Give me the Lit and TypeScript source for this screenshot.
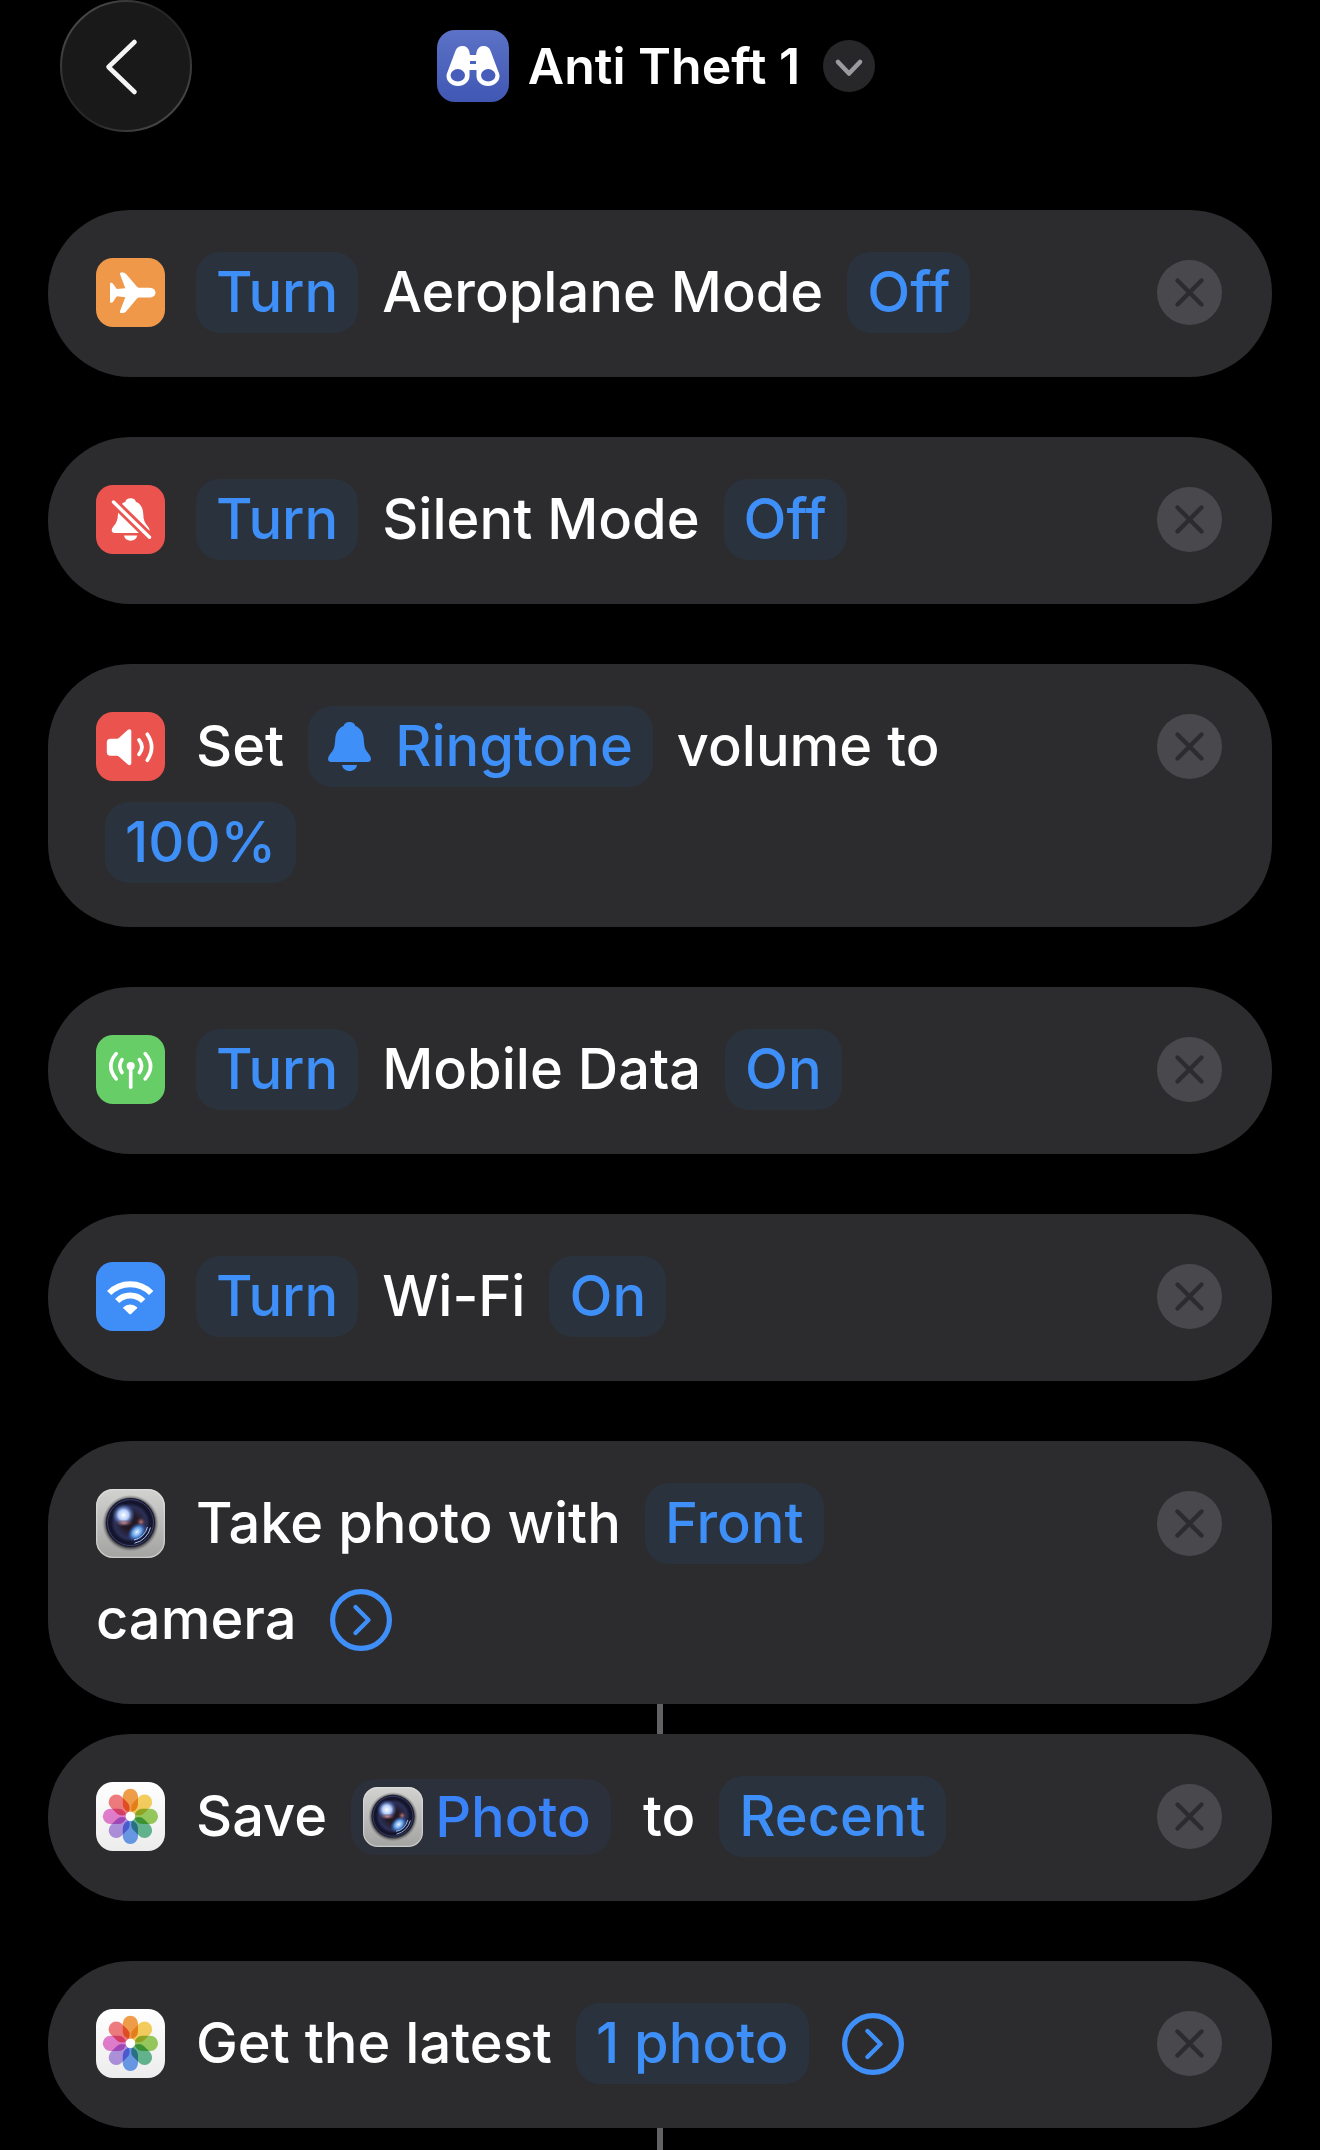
import { LitElement, html, css, svg, nothing } from "lit";
import { customElement, property } from "lit/decorators.js";

type Part =
    | { kind: "text"; text: string }
    | { kind: "chip"; text: string; icon?: string }
    | { kind: "variable"; text: string; icon: string }
    | { kind: "more" }
    | { kind: "group"; parts: Part[] };

interface Action {
    icon: string;
    name: string;
    parts: Part[];
    linked?: boolean;
}

const text = (text: string): Part => ({ kind: "text", text });
const chip = (text: string, icon?: string): Part => ({ kind: "chip", text, icon });
const more: Part = { kind: "more" };

const ACTIONS: Action[] = [
    { icon: "plane", name: "Aeroplane Mode", parts: [chip("Turn"), text("Aeroplane Mode"), chip("Off")] },
    { icon: "silent", name: "Silent Mode", parts: [chip("Turn"), text("Silent Mode"), chip("Off")] },
    { icon: "volume", name: "Volume", parts: [text("Set"), chip("Ringtone", "bell"), text("volume to"), chip("100%")] },
    { icon: "antenna", name: "Mobile Data", parts: [chip("Turn"), text("Mobile Data"), chip("On")] },
    { icon: "wifi", name: "Wi-Fi", parts: [chip("Turn"), text("Wi-Fi"), chip("On")] },
    {
        icon: "camera",
        name: "Take photo",
        parts: [text("Take photo with"), chip("Front"), { kind: "group", parts: [text("camera"), more] }],
        linked: true,
    },
    {
        icon: "photos",
        name: "Save photo",
        parts: [text("Save"), { kind: "variable", text: "Photo", icon: "camera" }, text("to"), chip("Recent")],
    },
    { icon: "photos", name: "Latest photo", parts: [text("Get the latest"), chip("1 photo"), more], linked: true },
];

const bellShape = svg`
    <path d="M21.5 0C18 0 16 1.8 15.6 4C10.5 6 7.8 10.5 7.3 16.5C6.8 23 6.5 26 4.5 29C2.5 32 0 34 0 37C0 39 1.3 40 3.3 40H39.7C41.7 40 43 39 43 37C43 34 40.5 32 38.5 29C36.5 26 36.2 23 35.7 16.5C35.2 10.5 32.5 6 27.4 4C27 1.8 25 0 21.5 0Z"/>
    <path d="M14 43H29C28.5 46.5 25.5 49 21.5 49C17.5 49 14.5 46.5 14 43Z"/>`;

const PETALS = ["#f08a22", "#f6c63a", "#84c33c", "#45ad7c", "#4c8bee", "#a57fe0", "#e264c8", "#ef6064"];

const GLYPHS: Record<string, unknown> = {
    plane: svg`
        <rect width="69" height="69" rx="17" fill="#f0984a"/>
        <path fill="#fff" d="M59.5 34.7C59.5 31 56 29.8 52 29.8H43.5C42.3 29.8 41.6 29.5 40.8 28.6L30.5 16.5C29.2 15 28.2 14.4 26 14.4H25C24 14.4 23.7 15.2 24 16.2L29.3 30.2L20.8 31.1L17.2 26C16.5 25 15.9 24.7 14.9 24.7C14.3 24.7 14 25.1 14 25.7V43.7C14 44.3 14.3 44.7 14.9 44.7C15.9 44.7 16.5 44.4 17.2 43.4L20.8 38.3L29.3 39.2L24 53.2C23.7 54.2 24 55 25 55H26C28.2 55 29.2 54.4 30.5 52.9L40.8 40.8C41.6 39.9 42.3 39.6 43.5 39.6H52C56 39.6 59.5 38.4 59.5 34.7Z"/>`,
    silent: svg`
        <rect width="69" height="69" rx="17" fill="#eb544e"/>
        <g fill="#fff" transform="translate(15.7 13.3) scale(.88 .865)">${bellShape}</g>
        <path stroke="#eb544e" stroke-width="9" d="M14 13.5L57 55.5"/>
        <path stroke="#fff" stroke-width="3.4" stroke-linecap="round" d="M17.5 17L53.5 52.3"/>`,
    volume: svg`
        <rect width="69" height="69" rx="17" fill="#eb544e"/>
        <path fill="#fff" d="M14.5 26.8H20.5C21.6 26.8 22.3 26.5 23.1 25.8L31.6 18C32.4 17.4 33 17.2 33.5 17.2C34.6 17.2 35.3 18 35.3 19V51.3C35.3 52.3 34.6 53.2 33.5 53.2C32.9 53.2 32.3 52.9 31.6 52.3L23.1 44.8C22.3 44.1 21.6 43.8 20.5 43.8H14.5C12 43.8 10.8 42.5 10.8 40V30.6C10.8 28.1 12 26.8 14.5 26.8Z"/>
        <g fill="none" stroke="#fff" stroke-width="3.7" stroke-linecap="round">
            <path d="M43 28Q49 35.2 43 42.4"/>
            <path d="M51.3 22.3Q60 35.2 51.3 48.3"/>
        </g>`,
    antenna: svg`
        <rect width="69" height="69" rx="17" fill="#67ce67"/>
        <circle cx="34.7" cy="31" r="4" fill="#fff"/>
        <g fill="none" stroke="#fff" stroke-width="3.6" stroke-linecap="round">
            <path d="M34.7 31V52.3"/>
            <path d="M26 24.6Q21.6 31 26 37.6M43.4 24.6Q47.8 31 43.4 37.6"/>
            <path d="M20.2 18.6Q9.4 31 20.2 43.8M49.2 18.6Q60 31 49.2 43.8"/>
        </g>`,
    wifi: svg`
        <rect width="69" height="69" rx="17" fill="#3f8ef7"/>
        <g fill="none" stroke="#fff" stroke-width="6">
            <path d="M13.2 31A29.5 29.5 0 0 1 55.2 31"/>
            <path d="M21.2 39A18 18 0 0 1 47.2 39"/>
        </g>
        <path fill="#fff" d="M27.3 45.3A9.8 9.8 0 0 1 41.1 45.3C41.4 45.7 41.3 46 41 46.3L35.1 52C34.5 52.5 33.9 52.5 33.3 52L27.4 46.3C27.1 46 27 45.7 27.3 45.3Z"/>`,
    camera: svg`
        <defs>
            <linearGradient id="body" x2="0" y2="1"><stop stop-color="#d2d2d1"/><stop offset="1" stop-color="#a3a3a2"/></linearGradient>
            <radialGradient id="halo"><stop offset=".86" stop-color="#4a4a4c"/><stop offset="1" stop-color="#8b8b8b" stop-opacity="0"/></radialGradient>
            <radialGradient id="glass"><stop offset=".3" stop-color="#231a26"/><stop offset=".65" stop-color="#2c3058"/><stop offset=".8" stop-color="#13142a"/><stop offset="1" stop-color="#191a2c"/></radialGradient>
            <radialGradient id="shine"><stop stop-color="#fff"/><stop offset=".45" stop-color="#b4ccfb"/><stop offset="1" stop-color="#3158b8" stop-opacity="0"/></radialGradient>
            <radialGradient id="glow"><stop stop-color="#e9f6ff"/><stop offset=".5" stop-color="#5e9ce6"/><stop offset="1" stop-color="#2450ae" stop-opacity="0"/></radialGradient>
            <radialGradient id="warm"><stop stop-color="#d79287" stop-opacity=".85"/><stop offset="1" stop-color="#6b3036" stop-opacity="0"/></radialGradient>
        </defs>
        <rect width="69" height="69" rx="17" fill="url(#body)"/>
        <rect x=".7" y=".7" width="67.6" height="67.6" rx="16.4" fill="none" stroke="#e4e4e3" stroke-opacity=".6" stroke-width="1.2"/>
        <circle cx="34.5" cy="34.3" r="28.5" fill="url(#halo)"/>
        <circle cx="34.5" cy="33.6" r="24.6" fill="url(#glass)"/>
        <circle cx="34.5" cy="33.6" r="23" fill="none" stroke="#3b4070" stroke-width="1"/>
        <ellipse cx="27.5" cy="26" rx="11.5" ry="11.5" fill="url(#shine)"/>
        <ellipse cx="28" cy="34" rx="9" ry="3.5" fill="url(#warm)"/>
        <ellipse cx="45" cy="33" rx="5" ry="5" fill="url(#warm)"/>
        <ellipse cx="41" cy="43" rx="11" ry="8" fill="url(#glow)" transform="rotate(-45 41 43)"/>
        <path fill="none" stroke="#a9c6f4" stroke-width="1" d="M51.5 38A17.5 17.5 0 0 1 38 51M54.5 38.5A20.8 20.8 0 0 1 38.5 54.2"/>`,
    photos: svg`
        <defs><linearGradient id="paper" x2="0" y2="1"><stop stop-color="#fff"/><stop offset="1" stop-color="#ececec"/></linearGradient></defs>
        <rect width="69" height="69" rx="17" fill="url(#paper)"/>
        <g transform="translate(34.4 34.3)">
            ${PETALS.map((color, i) => svg`<rect class="petal" x="-7.6" y="-27.6" width="15.2" height="23.4" rx="7.6" fill=${color} transform="rotate(${i * 45})"/>`)}
            <circle r="4.6" fill="#fff"/>
        </g>`,
};

const tile = (name: string) => html`<svg class="tile" viewBox="0 0 69 69" aria-hidden="true">${GLYPHS[name]}</svg>`;

@customElement("shortcut-action")
export class ShortcutAction extends LitElement {
    @property({ attribute: false }) action!: Action;

    static styles = [
        css`
            :host {
                display: block;
            }
            .card {
                display: flex;
                align-items: flex-start;
                gap: 32px;
                padding: 42px 50px 44px 48px;
                border-radius: 83px;
                background: #2c2c2e;
            }
            .line {
                flex: 1;
                display: flex;
                flex-wrap: wrap;
                align-items: center;
                gap: 15px;
                color: #fff;
            }
            .tile {
                display: block;
                flex: none;
                width: 69px;
                height: 69px;
            }
            .line > .tile {
                margin-right: 16px;
            }
            .petal {
                mix-blend-mode: multiply;
                opacity: 0.82;
            }
            .word {
                line-height: 81px;
                white-space: nowrap;
            }
            button {
                font: inherit;
                border: 0;
                cursor: pointer;
            }
            .chip {
                display: flex;
                align-items: center;
                gap: 24px;
                margin: 0 9px;
                padding: 0 20px;
                border-radius: 24px;
                background: #2a333d;
                color: #3f8ff8;
                line-height: 81px;
                white-space: nowrap;
            }
            .line > .tile + .chip {
                margin-left: 0;
            }
            .bell {
                width: 43px;
                height: 49px;
                fill: currentColor;
            }
            .variable {
                gap: 12px;
                margin-right: 17px;
                padding: 0 20px 0 12px;
                background: #2b303b;
                color: #3a82f7;
                line-height: 76px;
            }
            .variable .tile {
                width: 60px;
                height: 60px;
            }
            .group {
                display: flex;
                align-items: center;
                gap: 24px;
            }
            .more {
                display: block;
                margin-left: 9px;
                padding: 0;
                background: none;
                color: #3f8ff8;
            }
            .more svg,
            .remove svg {
                display: block;
            }
            .remove {
                flex: none;
                margin-top: 8px;
                padding: 0;
                background: none;
            }
        `,
    ];

    renderPart(part: Part): unknown {
        switch (part.kind) {
            case "text":
                return html`<span class="word">${part.text}</span>`;
            case "chip":
                return html`<button class="chip">
                    ${part.icon ? html`<svg class="bell" viewBox="0 0 43 49" aria-hidden="true">${bellShape}</svg>` : nothing}${part.text}
                </button>`;
            case "variable":
                return html`<button class="chip variable">${tile(part.icon)}${part.text}</button>`;
            case "more":
                return html`<button class="more" aria-label="Show more">
                    <svg width="62" height="62" viewBox="0 0 62 62" fill="none" stroke="currentColor">
                        <circle cx="31" cy="31" r="28.4" stroke-width="5.2"/>
                        <path d="M25.5 18L38.5 31L25.5 44" stroke-width="4.4" stroke-linecap="round" stroke-linejoin="round"/>
                    </svg>
                </button>`;
            case "group":
                return html`<span class="group">${part.parts.map((p) => this.renderPart(p))}</span>`;
        }
    }

    render() {
        return html`
            <article class="card">
                <div class="line">${tile(this.action.icon)}${this.action.parts.map((p) => this.renderPart(p))}</div>
                <button class="remove" aria-label="Remove ${this.action.name}">
                    <svg width="65" height="65" viewBox="0 0 65 65">
                        <circle cx="32.5" cy="32.5" r="32.5" fill="#49494d"/>
                        <path d="M20.5 20.5L44.5 44.5M44.5 20.5L20.5 44.5" stroke="#2c2c2e" stroke-width="4.4" stroke-linecap="round"/>
                    </svg>
                </button>
            </article>
        `;
    }
}

@customElement("app-root")
export class AppRoot extends LitElement {
    static styles = [
        css`
            :host {
                display: block;
                box-sizing: border-box;
                min-height: 100vh;
                background: #000;
                color: #fff;
                font-family: Inter, "Liberation Sans", sans-serif;
                font-size: 56px;
                font-weight: 500;
            }
            header {
                display: grid;
                grid-template-columns: 1fr auto 1fr;
                align-items: center;
                padding: 0 68px 0 60px;
            }
            button {
                padding: 0;
                border: 0;
                background: none;
                cursor: pointer;
            }
            .back {
                justify-self: start;
            }
            svg {
                display: block;
            }
            .title {
                display: flex;
                align-items: center;
                gap: 19px;
            }
            h1 {
                margin: 0;
                font-size: 50px;
                font-weight: 600;
                line-height: 60px;
                white-space: nowrap;
            }
            .menu {
                margin-left: 4px;
            }
            ol {
                display: flex;
                flex-direction: column;
                gap: 60px;
                margin: 0;
                padding: 78px 48px 0;
                list-style: none;
            }
            /* a linked action hands its output to the one below */
            .linked {
                margin-bottom: -30px;
            }
            .linked::after {
                content: "";
                display: block;
                width: 6px;
                height: 30px;
                margin: 0 auto -30px;
                background: #626264;
            }
            .linked:last-child {
                margin-bottom: 0;
            }
            .linked:last-child::after {
                height: 22px;
                margin-bottom: 0;
            }
        `,
    ];

    render() {
        return html`
            <header>
                <button class="back" aria-label="Back">
                    <svg width="132" height="132" viewBox="0 0 132 132" fill="none">
                        <defs>
                            <linearGradient id="rim" x2="1" y2="1">
                                <stop offset=".1" stop-color="#4c4c4c"/>
                                <stop offset=".4" stop-color="#272727"/>
                                <stop offset=".6" stop-color="#272727"/>
                                <stop offset=".9" stop-color="#4c4c4c"/>
                            </linearGradient>
                        </defs>
                        <circle cx="66" cy="66" r="65" fill="#191919" stroke="url(#rim)" stroke-width="2"/>
                        <path d="M74.5 42L48.5 67L74.5 92" stroke="#f4f4f4" stroke-width="4.6" stroke-linecap="round" stroke-linejoin="round"/>
                    </svg>
                </button>
                <div class="title">
                    <svg width="72" height="72" viewBox="0 0 72 72" aria-hidden="true">
                        <defs><linearGradient id="sky" x2="0" y2="1"><stop stop-color="#5c72c6"/><stop offset="1" stop-color="#4057b4"/></linearGradient></defs>
                        <rect width="72" height="72" rx="18" fill="url(#sky)"/>
                        <path fill="#fff" d="M25.5 16C29 16 31.5 18 32.3 21.5L33 25H39L39.7 21.5C40.5 18 43 16 46.5 16C50 16 52.4 17.8 53.6 21L61.3 41.5C62 43.2 62.5 44.5 62.5 46C62.5 51.6 57.4 56 51 56C44.6 56 39.5 51.6 39.5 46V40H32.5V46C32.5 51.6 27.4 56 21 56C14.6 56 9.5 51.6 9.5 46C9.5 44.5 10 43.2 10.7 41.5L18.4 21C19.6 17.8 22 16 25.5 16Z"/>
                        <path fill="#4c63bd" d="M33 31H39V34H33Z"/>
                        <ellipse cx="20.8" cy="45.3" rx="7.2" ry="6.2" fill="#465dba"/>
                        <ellipse cx="51.2" cy="45.3" rx="7.2" ry="6.2" fill="#465dba"/>
                    </svg>
                    <h1>Anti Theft 1</h1>
                    <button class="menu" aria-label="Shortcut options">
                        <svg width="52" height="52" viewBox="0 0 52 52" fill="none">
                            <circle cx="26" cy="26" r="26" fill="#27272a"/>
                            <path d="M15 22L26 33.5L37 22" stroke="#9b9b9f" stroke-width="4.6" stroke-linecap="round" stroke-linejoin="round"/>
                        </svg>
                    </button>
                </div>
            </header>
            <ol>
                ${ACTIONS.map((action) => html`
                    <li class=${action.linked ? "linked" : ""}>
                        <shortcut-action .action=${action}></shortcut-action>
                    </li>
                `)}
            </ol>
        `;
    }
}

declare global {
    interface HTMLElementTagNameMap {
        "app-root": AppRoot;
        "shortcut-action": ShortcutAction;
    }
}
